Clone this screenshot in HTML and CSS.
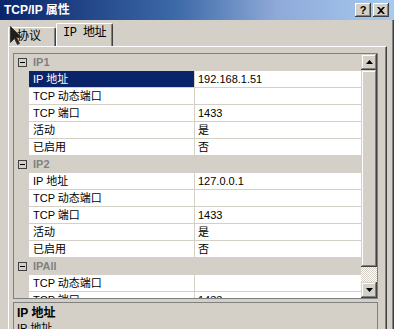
FILE: index.html
```html
<!DOCTYPE html>
<html>
<head>
<meta charset="utf-8">
<title>TCP/IP 属性</title>
<link rel="stylesheet" href="styles.css">
</head>
<body>
<div class="window">
  <div class="titlebar">
    <span class="title">TCP/IP 属性</span>
    <span class="tbtn help">?</span>
    <span class="tbtn close"><svg width="8" height="7" viewBox="0 0 8 7"><path d="M0 0h2l2 2 2-2h2L5 3.5 8 7H6L4 5 2 7H0l3-3.5z" fill="#000"/></svg></span>
  </div>
  <div class="client">
    <div class="tabs">
      <div class="tab">协议</div>
      <div class="tab sel">IP 地址</div>
    </div>
    <div class="pane">
      <div class="grid">
        <div class="rows">
          <div class="cat"><span class="margin"><span class="expander"></span></span><span class="catname">IP1</span></div>
          <div class="row sel"><span class="margin"></span><span class="name">IP 地址</span><span class="value">192.168.1.51</span></div>
          <div class="row"><span class="margin"></span><span class="name">TCP 动态端口</span><span class="value"></span></div>
          <div class="row"><span class="margin"></span><span class="name">TCP 端口</span><span class="value">1433</span></div>
          <div class="row"><span class="margin"></span><span class="name">活动</span><span class="value">是</span></div>
          <div class="row"><span class="margin"></span><span class="name">已启用</span><span class="value">否</span></div>
          <div class="cat"><span class="margin"><span class="expander"></span></span><span class="catname">IP2</span></div>
          <div class="row"><span class="margin"></span><span class="name">IP 地址</span><span class="value">127.0.0.1</span></div>
          <div class="row"><span class="margin"></span><span class="name">TCP 动态端口</span><span class="value"></span></div>
          <div class="row"><span class="margin"></span><span class="name">TCP 端口</span><span class="value">1433</span></div>
          <div class="row"><span class="margin"></span><span class="name">活动</span><span class="value">是</span></div>
          <div class="row"><span class="margin"></span><span class="name">已启用</span><span class="value">否</span></div>
          <div class="cat"><span class="margin"><span class="expander"></span></span><span class="catname">IPAll</span></div>
          <div class="row"><span class="margin"></span><span class="name">TCP 动态端口</span><span class="value"></span></div>
          <div class="row"><span class="margin"></span><span class="name">TCP 端口</span><span class="value">1433</span></div>
        </div>
        <div class="vscroll">
          <div class="sbtn"><svg width="7" height="4" viewBox="0 0 7 4"><path d="M3.5 0L7 4H0z" fill="#000"/></svg></div>
          <div class="thumb"></div>
          <div class="track"></div>
          <div class="sbtn"><svg width="7" height="4" viewBox="0 0 7 4"><path d="M0 0h7L3.5 4z" fill="#000"/></svg></div>
        </div>
      </div>
      <div class="desc">
        <div class="desc-title">IP 地址</div>
        <div class="desc-text">IP 地址</div>
      </div>
    </div>
  </div>
  <svg class="cursor" width="13" height="20" viewBox="0 0 13 20"><path d="M0.5 0.5V16.5L4.5 12.5L7.5 18.5L9.5 17.5L6.5 11.5H11.5Z" fill="#1e1e1e" stroke="#3a3a3a" stroke-width="1"/></svg>
</div>
</body>
</html>
```

FILE: styles.css
```css
* { box-sizing: border-box; }
html, body { margin: 0; padding: 0; background: #d4d0c8; }
.window {
  position: relative;
  width: 394px;
  height: 329px;
  overflow: hidden;
  background: #d4d0c8;
  display: flex;
  flex-direction: column;
  font-family: "Liberation Sans", "Noto Sans CJK SC", sans-serif;
  font-size: 11px;
  color: #000;
}
.titlebar {
  height: 20px;
  flex: none;
  display: flex;
  align-items: center;
  gap: 2px;
  padding: 0 5px 0 4px;
  background: linear-gradient(to right, #0a246a 0%, #3d6aa8 45%, #8fa9d8 70%, #a6caf0 100%);
}
.title {
  flex: 1;
  color: #fff;
  font-weight: bold;
  font-size: 12px;
  line-height: 14px;
  white-space: nowrap;
}
.tbtn {
  width: 16px;
  height: 14px;
  display: flex;
  align-items: center;
  justify-content: center;
  background: #d4d0c8;
  box-shadow: inset -1px -1px 0 #404040, inset 1px 1px 0 #fff, inset -2px -2px 0 #808080;
  font-weight: bold;
  font-size: 11px;
  line-height: 12px;
}
.client {
  flex: 1;
  display: flex;
  flex-direction: column;
  padding: 0 7px 0 8px;
  box-shadow: inset -1px 0 0 #404040, inset -2px 0 0 #808080;
}
.tabs {
  height: 26px;
  flex: none;
  display: flex;
  align-items: flex-end;
}
.tab {
  height: 19px;
  width: 48px;
  padding-left: 8px;
  font-size: 12px;
  line-height: 17px;
  border-top: 1px solid #fff;
  border-left: 1px solid #fff;
  border-right: 1px solid #404040;
  border-top-left-radius: 2px;
  border-top-right-radius: 2px;
  box-shadow: inset -1px 0 0 #808080;
}
.tab.sel {
  height: 23px;
  width: 57px;
  padding-left: 0;
  text-align: center;
  line-height: 19px;
  font-family: "Liberation Mono", "Noto Sans CJK SC", monospace;
  letter-spacing: -0.5px;
}
.pane {
  flex: 1;
  border-top: 1px solid #fff;
  border-left: 1px solid #fff;
  border-right: 1px solid #404040;
  box-shadow: inset -1px 0 0 #808080;
  padding: 6px 8px 0 4px;
  display: flex;
  flex-direction: column;
}
.grid {
  height: 246px;
  flex: none;
  width: 365px;
  border: 1px solid #808080;
  display: flex;
  background: #d4d0c8;
}
.rows {
  width: 347px;
  overflow: hidden;
}
.row, .cat {
  display: flex;
  height: 17px;
  line-height: 16px;
  white-space: nowrap;
}
.margin {
  width: 15px;
  flex: none;
  display: flex;
  align-items: center;
  justify-content: center;
  padding-left: 2px;
  padding-bottom: 1px;
}
.expander {
  width: 9px;
  height: 9px;
  border: 1px solid #404040;
  position: relative;
}
.expander::after {
  content: "";
  position: absolute;
  left: 1px;
  top: 3px;
  width: 5px;
  height: 1px;
  background: #000;
}
.catname {
  padding-left: 4px;
  font-weight: bold;
  color: #808080;
}
.name {
  width: 166px;
  flex: none;
  padding-left: 4px;
  background: #fff;
  border-right: 1px solid #d4d0c8;
  border-bottom: 1px solid #d4d0c8;
}
.row.sel .name {
  background: #0a246a;
  color: #fff;
}
.value {
  flex: 1;
  padding-left: 3px;
  background: #fff;
  border-bottom: 1px solid #d4d0c8;
}
.vscroll {
  width: 16px;
  flex: none;
  display: flex;
  flex-direction: column;
}
.sbtn, .thumb {
  background: #d4d0c8;
  box-shadow: inset -1px -1px 0 #404040, inset 1px 1px 0 #d4d0c8, inset -2px -2px 0 #808080, inset 2px 2px 0 #fff;
}
.sbtn {
  height: 16px;
  display: flex;
  align-items: center;
  justify-content: center;
}
.thumb { height: 197px; }
.track {
  height: 15px;
  background: repeating-conic-gradient(#fff 0 25%, #d4d0c8 0 50%) 0 0 / 2px 2px;
}
.desc {
  margin-top: 3px;
  width: 365px;
  flex: 1;
  border-top: 1px solid #808080;
  border-left: 1px solid #808080;
  border-right: 1px solid #808080;
  padding: 3px 0 0 3px;
}
.desc-title {
  font-weight: bold;
  font-size: 12px;
  line-height: 15px;
}
.desc-text {
  line-height: 15px;
}
.cursor {
  position: absolute;
  left: 10px;
  top: 26px;
}
```
